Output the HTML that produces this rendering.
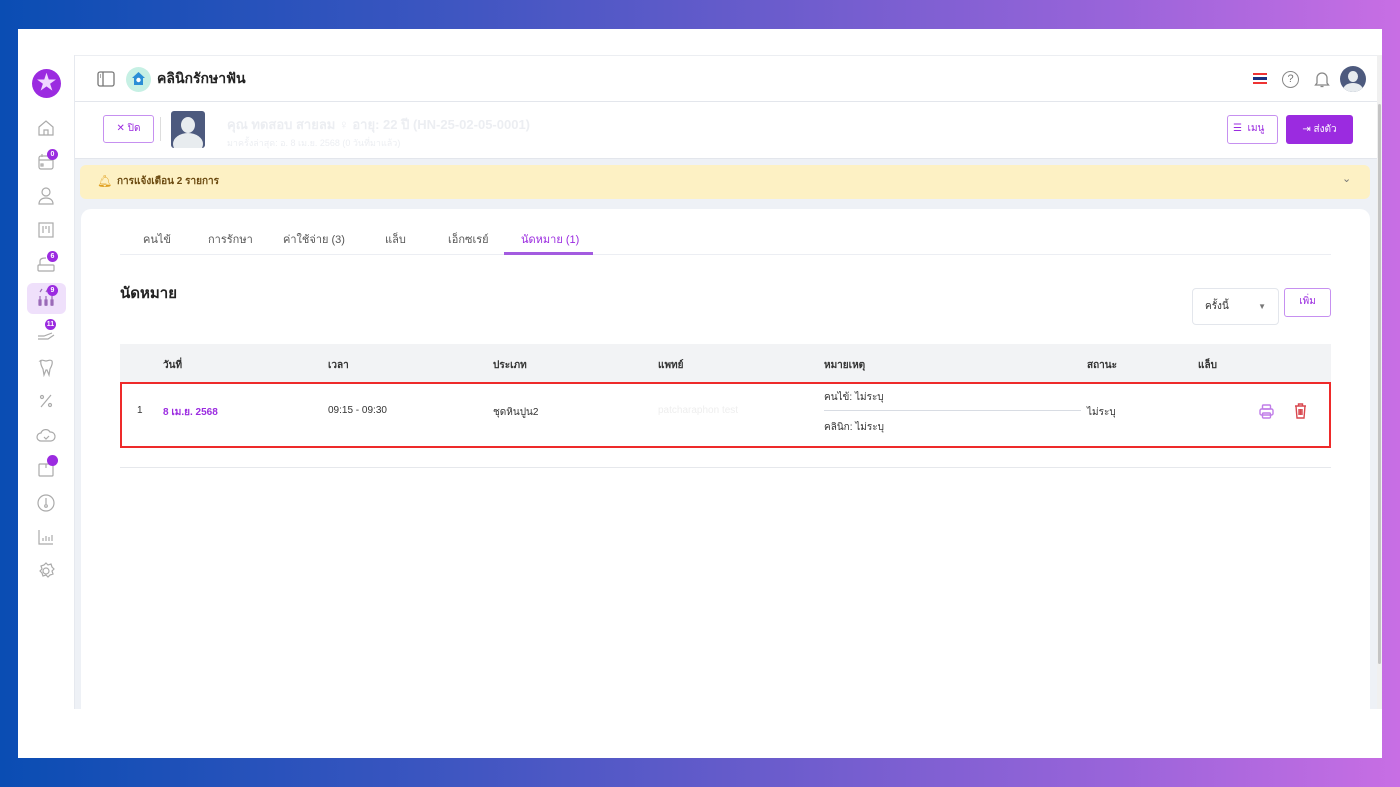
<!DOCTYPE html>
<html><head><meta charset="utf-8">
<style>
*{box-sizing:border-box;margin:0;padding:0}
body{width:1400px;height:787px;overflow:hidden;position:relative;font-family:"Liberation Sans","Noto Sans CJK SC",sans-serif;background:linear-gradient(90deg,#0a4db3 0%,#3a55c0 30%,#6a5ccc 55%,#9a64da 80%,#c86ee4 100%);color:#333}
.frame{position:absolute;left:18px;top:29px;width:1364px;height:729px;background:#fff;overflow:hidden}
.abs{position:absolute}
.side{left:0;top:26px;width:57px;height:654px;background:#fff;border-right:1px solid #e6e9ef}
.hdr{left:57px;top:26px;width:1302px;height:47px;background:#fff;border-bottom:1px solid #e3e6ec;border-top:1px solid #eceef2}
.main{left:57px;top:73px;width:1302px;height:607px;background:#eef1f6}
.ico{position:absolute;left:18px;width:20px;height:20px}
.badge{position:absolute;background:#9b2be0;color:#fff;font-size:7px;font-weight:bold;border-radius:6px;min-width:11px;height:11px;line-height:11px;text-align:center}
.tabs span{position:absolute;top:201px;font-size:11px;color:#555}
.hd{position:absolute;top:329px;font-size:10px;font-weight:bold;color:#333}
.cell{position:absolute;font-size:10px;color:#333}
</style></head><body>
<div class="frame">
 <div class="abs side">
  <div class="abs" style="left:14px;top:14px;width:29px;height:29px;border-radius:50%;background:#9b2be0;color:#f0d8ff;font-size:20px;line-height:29px;text-align:center">★</div>
  <svg class="ico" style="top:63px" viewBox="0 0 20 20" fill="none" stroke="#aaa" stroke-width="1.2"><path d="M3 9l7-6 7 6v8H3z"/><path d="M8 17v-5h4v5"/></svg>
  <svg class="ico" style="top:97px" viewBox="0 0 20 20" fill="none" stroke="#aaa" stroke-width="1.2"><rect x="3" y="4" width="14" height="13" rx="2"/><path d="M3 8h14M6 2v3"/><rect x="5" y="12" width="2" height="2"/></svg>
  <div class="badge" style="left:29px;top:94px">0</div>
  <svg class="ico" style="top:131px" viewBox="0 0 20 20" fill="none" stroke="#aaa" stroke-width="1.2"><circle cx="10" cy="6" r="4"/><path d="M3 18c0-4 3-6 7-6s7 2 7 6z"/></svg>
  <svg class="ico" style="top:165px" viewBox="0 0 20 20" fill="none" stroke="#aaa" stroke-width="1.2"><rect x="3" y="3" width="14" height="14"/><path d="M7 6v7M10 6v3M13 6v7"/></svg>
  <svg class="ico" style="top:199px" viewBox="0 0 20 20" fill="none" stroke="#aaa" stroke-width="1.2"><rect x="2" y="11" width="16" height="6" rx="1"/><path d="M4 11V7c0-3 4-3 6-3"/></svg>
  <div class="badge" style="left:29px;top:196px">6</div>
  <div class="abs" style="left:9px;top:228px;width:39px;height:31px;border-radius:6px;background:#efe0fb"></div>
  <svg class="ico" style="top:233px" viewBox="0 0 20 20" fill="none" stroke="#9a6ab8" stroke-width="1.2"><path d="M4 8v10M10 8v10M16 8v10M4 4l2-3M10 4l2-3"/><rect x="3" y="12" width="2" height="5"/><rect x="9" y="12" width="2" height="5"/><rect x="15" y="12" width="2" height="5"/></svg>
  <div class="badge" style="left:29px;top:230px">9</div>
  <svg class="ico" style="top:267px" viewBox="0 0 20 20" fill="none" stroke="#aaa" stroke-width="1.2"><path d="M2 14h6l8-3M2 17h10l6-4"/></svg>
  <div class="badge" style="left:27px;top:264px">11</div>
  <svg class="ico" style="top:302px" viewBox="0 0 20 20" fill="none" stroke="#aaa" stroke-width="1.2"><path d="M4 4c2-2 4 0 6 0s4-2 6 0c1 3-1 6-2 8l-1 6-2-5-1 0-2 5-1-6c-1-2-3-5-2-8z"/></svg>
  <svg class="ico" style="top:336px" viewBox="0 0 20 20" fill="none" stroke="#aaa" stroke-width="1.2"><path d="M15 4L5 16"/><circle cx="6" cy="6" r="1.5"/><circle cx="14" cy="14" r="1.5"/></svg>
  <svg class="ico" style="top:370px" viewBox="0 0 20 20" fill="none" stroke="#aaa" stroke-width="1.2"><path d="M5 16a4 4 0 010-8 5 5 0 019-1 4 4 0 011 9z"/><path d="M8 12l2 2 3-3"/></svg>
  <svg class="ico" style="top:403px" viewBox="0 0 20 20" fill="none" stroke="#aaa" stroke-width="1.2"><rect x="3" y="6" width="14" height="12" rx="1"/><path d="M10 6v4"/></svg>
  <div class="abs" style="left:29px;top:400px;width:11px;height:11px;border-radius:50%;background:#9b2be0"></div>
  <svg class="ico" style="top:438px" viewBox="0 0 20 20" fill="none" stroke="#aaa" stroke-width="1.2"><circle cx="10" cy="10" r="8"/><path d="M10 5v6"/><circle cx="10" cy="13" r="1.3"/></svg>
  <svg class="ico" style="top:472px" viewBox="0 0 20 20" fill="none" stroke="#aaa" stroke-width="1.2"><path d="M3 3v14h14M7 14v-3M10 14v-5M13 14v-4M16 14v-6"/></svg>
  <svg class="ico" style="top:506px" viewBox="0 0 20 20" fill="none" stroke="#aaa" stroke-width="1.2"><circle cx="10" cy="10" r="3"/><path d="M10 2l2 2 3-1 1 3 2 2-2 2 1 3-3 1-2 2-2-2-3 1-1-3-2-2 2-2-1-3 3-1z"/></svg>
 </div>
 <div class="abs hdr">
  <svg class="abs" style="left:22px;top:15px" width="18" height="16" viewBox="0 0 18 16" fill="none" stroke="#777" stroke-width="1.3"><rect x="1" y="1" width="16" height="14" rx="2"/><path d="M6 1v14M3 4h1M3 6h1"/></svg>
  <div class="abs" style="left:51px;top:11px;width:25px;height:25px;border-radius:50%;background:#c6f0e4"></div>
  <svg class="abs" style="left:56px;top:15px" width="15" height="15" viewBox="0 0 15 15"><path d="M7.5 1L1 7h2v7h9V7h2z" fill="#2a8ed6"/><circle cx="7.5" cy="9" r="2.2" fill="#fff"/></svg>
  <div class="abs" style="left:82px;top:12px;font-size:14px;font-weight:bold;color:#222">คลินิกรักษาฟัน</div>
  <div class="abs" style="left:1178px;top:17px;width:14px;height:11px;background:linear-gradient(#e33 0 18%,#fff 18% 36%,#1b2f80 36% 64%,#fff 64% 82%,#e33 82%)"></div>
  <div class="abs" style="left:1207px;top:15px;width:17px;height:17px;border:1.5px solid #888;border-radius:50%;font-size:11px;text-align:center;line-height:14px;color:#777">?</div>
  <svg class="abs" style="left:1239px;top:14px" width="16" height="18" viewBox="0 0 16 18" fill="none" stroke="#888" stroke-width="1.3"><path d="M3 13V8a5 5 0 0110 0v5l1.5 2h-13z"/><path d="M6.5 16.5h3"/></svg>
  <div class="abs" style="left:1265px;top:10px;width:26px;height:26px;border-radius:50%;background:#4d5a7e;overflow:hidden"><div style="position:absolute;left:8px;top:5px;width:10px;height:11px;border-radius:50%;background:#e8ecef"></div><div style="position:absolute;left:3px;top:17px;width:20px;height:14px;border-radius:50%;background:#e8ecef"></div></div>
 </div>
 <div class="abs main">
  <div class="abs" style="left:0;top:0;width:1302px;height:57px;background:#fff;border-bottom:1px solid #e3e6ec"></div>
  <div class="abs" style="left:28px;top:13px;width:51px;height:28px;border:1.5px solid #c690f0;border-radius:3px;color:#9b2be0;font-size:10px;line-height:25px;text-align:center">✕ ปิด</div>
  <div class="abs" style="left:85px;top:15px;width:1px;height:24px;background:#ddd"></div>
  <div class="abs" style="left:96px;top:9px;width:34px;height:37px;border-radius:3px;background:#4d5a7e;overflow:hidden"><div style="position:absolute;left:10px;top:6px;width:14px;height:16px;border-radius:50%;background:#e8ecef"></div><div style="position:absolute;left:2px;top:22px;width:30px;height:22px;border-radius:50%;background:#e8ecef"></div></div>
  <div class="abs" style="left:152px;top:12px;font-size:13px;color:#eceef2;font-weight:bold">คุณ ทดสอบ สายลม ♀ อายุ: 22 ปี (HN-25-02-05-0001)</div>
  <div class="abs" style="left:152px;top:34px;font-size:9px;color:#eceef2">มาครั้งล่าสุด: อ. 8 เม.ย. 2568 (0 วันที่มาแล้ว)</div>
  <div class="abs" style="left:1152px;top:13px;width:51px;height:29px;border:1.5px solid #c690f0;border-radius:3px;color:#9b2be0;font-size:10px;line-height:26px;padding-left:5px">☰ &nbsp;เมนู</div>
  <div class="abs" style="left:1211px;top:13px;width:67px;height:29px;background:#9b2be0;border-radius:3px;color:#fff;font-size:10px;line-height:29px;text-align:center">⇥ ส่งตัว</div>
  <div class="abs" style="left:5px;top:63px;width:1290px;height:34px;background:#fdf1c4;border-radius:6px"></div>
  <div class="abs" style="left:22px;top:72px;font-size:12px;color:#e0a020">🔔︎</div>
  <div class="abs" style="left:42px;top:72px;font-size:10px;font-weight:bold;color:#6b4a10">การแจ้งเตือน 2 รายการ</div>
  <div class="abs" style="left:1267px;top:70px;font-size:11px;color:#777">⌄</div>
  <div class="abs" style="left:6px;top:107px;width:1289px;height:510px;background:#fff;border-radius:10px"></div>
 </div>
 <div class="tabs">
  <span style="left:125px">คนไข้</span><span style="left:190px">การรักษา</span><span style="left:265px">ค่าใช้จ่าย (3)</span><span style="left:367px">แล็บ</span><span style="left:430px">เอ็กซเรย์</span><span style="left:503px;color:#9b2be0">นัดหมาย (1)</span>
 </div>
 <div class="abs" style="left:102px;top:225px;width:1211px;height:1px;background:#eceef3"></div>
 <div class="abs" style="left:486px;top:223px;width:89px;height:3px;background:#a35be0"></div>
 <div class="abs" style="left:102px;top:252px;font-size:15px;font-weight:bold;color:#222">นัดหมาย</div>
 <div class="abs" style="left:1174px;top:259px;width:87px;height:37px;border:1px solid #e3e6ec;border-radius:4px;font-size:10px;line-height:35px;padding-left:12px">ครั้งนี้<span style="position:absolute;right:12px;color:#777;font-size:8px">▼</span></div>
 <div class="abs" style="left:1266px;top:259px;width:47px;height:29px;border:1.5px solid #c690f0;border-radius:3px;color:#9b2be0;font-size:10px;line-height:26px;text-align:center">เพิ่ม</div>
 <div class="abs" style="left:102px;top:315px;width:1211px;height:38px;background:#f2f3f5"></div>
 <div class="hd" style="left:145px">วันที่</div><div class="hd" style="left:310px">เวลา</div><div class="hd" style="left:475px">ประเภท</div><div class="hd" style="left:640px">แพทย์</div><div class="hd" style="left:806px">หมายเหตุ</div><div class="hd" style="left:1069px">สถานะ</div><div class="hd" style="left:1180px">แล็บ</div>
 <div class="abs" style="left:102px;top:353px;width:1211px;height:66px;border:2px solid #ee2a2a"></div>
 <div class="cell" style="left:119px;top:376px">1</div>
 <div class="cell" style="left:145px;top:376px;color:#9b2be0;font-weight:bold">8 เม.ย. 2568</div>
 <div class="cell" style="left:310px;top:376px">09:15 - 09:30</div>
 <div class="cell" style="left:475px;top:376px">ชุดหินปูน2</div>
 <div class="cell" style="left:640px;top:376px;color:#eee">patcharaphon test</div>
 <div class="cell" style="left:806px;top:361px">คนไข้: ไม่ระบุ</div>
 <div class="abs" style="left:806px;top:381px;width:257px;height:1px;background:#d8dce3"></div>
 <div class="cell" style="left:806px;top:391px">คลินิก: ไม่ระบุ</div>
 <div class="cell" style="left:1069px;top:376px">ไม่ระบุ</div>
 <svg class="abs" style="left:1241px;top:375px" width="15" height="15" viewBox="0 0 15 15" fill="none" stroke="#c07de8" stroke-width="1.4"><rect x="3.5" y="1" width="8" height="4" rx="1"/><rect x="1" y="5" width="13" height="6" rx="1.5"/><rect x="3.5" y="9" width="8" height="5" rx="1"/></svg>
 <svg class="abs" style="left:1276px;top:374px" width="13" height="16" viewBox="0 0 13 16" fill="none" stroke="#d9474e" stroke-width="1.4"><path d="M1 3h11M4.5 3V1h4v2"/><path d="M2 3l1 12h7l1-12"/><path d="M5 6v6M6.5 6v6M8 6v6"/></svg>
 <div class="abs" style="left:102px;top:438px;width:1211px;height:1px;background:#e6e8ec"></div>
 <div class="abs" style="left:1359px;top:26px;width:5px;height:654px;background:#f0f0f0"></div>
 <div class="abs" style="left:1360px;top:75px;width:3px;height:560px;background:#c4c4c4;border-radius:2px"></div>
</div>
</body></html>
